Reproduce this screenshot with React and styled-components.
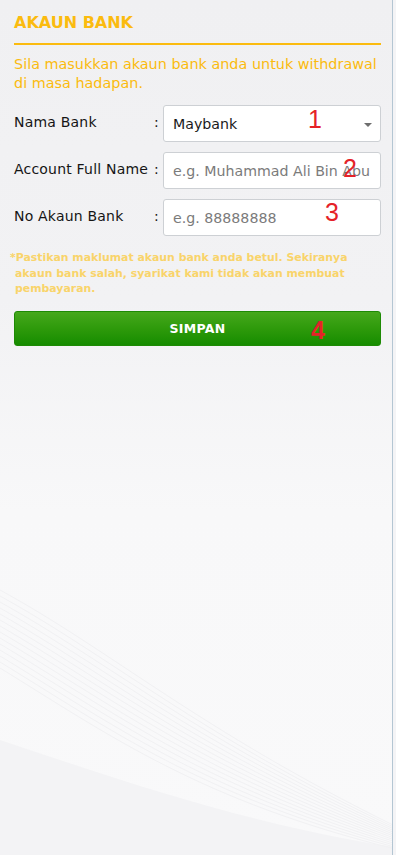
import React from 'react';
import styled, { createGlobalStyle } from 'styled-components';

const GlobalStyle = createGlobalStyle`
  html, body {
    margin: 0;
    padding: 0;
    background: #f4f4f6;
  }
  body {
    font-family: 'DejaVu Sans', 'Noto Sans', sans-serif;
  }
`;

const YELLOW = '#fbbb0f';

const Page = styled.div`
  position: relative;
  width: 393px;
  min-height: 855px;
  box-sizing: border-box;
  border-right: 1px solid #b4c6d3;
  background: linear-gradient(180deg, #f0f0f2 0%, #f2f2f4 35%, #f8f8f9 60%, #f9f9fa 100%);
  padding: 12px 11px 0 14px;
  overflow: hidden;
`;

const Backdrop = styled.svg`
  position: absolute;
  left: 0;
  bottom: 0;
  width: 393px;
  height: 300px;
  pointer-events: none;
`;

const Content = styled.div`
  position: relative;
`;

const Title = styled.h2`
  margin: 0;
  font-size: 16px;
  font-weight: bold;
  color: ${YELLOW};
  line-height: 22px;
  padding-bottom: 9px;
  border-bottom: 2px solid ${YELLOW};
`;

const Lead = styled.p`
  margin: 10px 0 0;
  font-size: 14.4px;
  line-height: 19px;
  color: ${YELLOW};
`;

const Form = styled.div`
  display: flex;
  flex-direction: column;
  gap: 10px;
  margin-top: 12px;
`;

const Row = styled.div`
  display: flex;
  align-items: center;
  height: 37px;
`;

const Label = styled.span`
  width: 140px;
  font-size: 14px;
  letter-spacing: 0.2px;
  color: #151515;
  margin-top: -4px;
  white-space: nowrap;
`;

const Colon = styled.span`
  width: 9px;
  font-size: 14px;
  color: #151515;
  margin-top: -4px;
`;

const Field = styled.div`
  position: relative;
  flex: 1;
  height: 37px;
  box-sizing: border-box;
  background: #fff;
  border: 1px solid #cdd0d4;
  border-radius: 3px;
  display: flex;
  align-items: center;
  padding: 0 9px;
  overflow: hidden;
`;

const Value = styled.span`
  font-size: 14.2px;
  color: ${p => (p.$placeholder ? '#7b7b7b' : '#1a1a1a')};
  white-space: nowrap;
`;

const Caret = styled.span`
  position: absolute;
  right: 8px;
  top: 17px;
  width: 0;
  height: 0;
  border-left: 4.5px solid transparent;
  border-right: 4.5px solid transparent;
  border-top: 4.5px solid #6e6e6e;
`;

const Mark = styled.span`
  position: absolute;
  left: ${p => p.$x}px;
  top: ${p => p.$y}px;
  font-family: 'Liberation Sans', sans-serif;
  font-size: 25px;
  line-height: 1;
  color: #e52228;
  pointer-events: none;
`;

const Note = styled.p`
  margin: 14px 0 0;
  padding-left: 1px;
  text-indent: -5px;
  font-size: 10.9px;
  line-height: 15.5px;
  font-weight: bold;
  color: #f9d46a;
`;

const SaveButton = styled.button`
  position: relative;
  display: block;
  width: 100%;
  height: 35px;
  margin-top: 14px;
  border: 1px solid #1e8a05;
  border-radius: 3px;
  background: linear-gradient(180deg, #46a81c 0%, #2e9a0b 50%, #168c00 100%);
  color: #fff;
  font-family: 'DejaVu Sans', sans-serif;
  font-size: 12.5px;
  font-weight: bold;
  letter-spacing: 0.3px;
  cursor: pointer;
`;

const fields = [
  { label: 'Nama Bank', value: 'Maybank', select: true, mark: '1', mx: 144, my: 1 },
  { label: 'Account Full Name', value: 'e.g. Muhammad Ali Bin Abu', placeholder: true, mark: '2', mx: 179, my: 3 },
  { label: 'No Akaun Bank', value: 'e.g. 88888888', placeholder: true, mark: '3', mx: 161, my: 0 },
];

// faint swoosh lines in the lower-left of the panel
const waveLines = Array.from({ length: 14 }, (_, i) => i * 6);

export default function App() {
  return (
    <>
      <GlobalStyle />
      <Page>
        <Backdrop viewBox="0 0 393 300" preserveAspectRatio="none">
          <path d="M0 185 C 120 225, 250 270, 393 292 L 393 300 L 0 300 Z" fill="#f3f3f5" />
          {waveLines.map(o => (
            <path
              key={o}
              d={`M0 ${35 + o} C 110 ${95 + o * 1.1}, 200 ${175 + o * 0.9}, 393 ${270 + o * 0.3}`}
              fill="none"
              stroke="#f1f1f3"
              strokeWidth="1"
            />
          ))}
        </Backdrop>

        <Content>
          <Title>AKAUN BANK</Title>
          <Lead>Sila masukkan akaun bank anda untuk withdrawal di masa hadapan.</Lead>

          <Form>
            {fields.map(f => (
              <Row key={f.label}>
                <Label>{f.label}</Label>
                <Colon>:</Colon>
                <Field>
                  <Value $placeholder={f.placeholder}>{f.value}</Value>
                  {f.select && <Caret />}
                  <Mark $x={f.mx} $y={f.my}>{f.mark}</Mark>
                </Field>
              </Row>
            ))}
          </Form>

          <Note>
            *Pastikan maklumat akaun bank anda betul. Sekiranya akaun bank salah, syarikat kami
            tidak akan membuat pembayaran.
          </Note>

          <SaveButton type="button">
            SIMPAN
            <Mark $x={296} $y={6}>4</Mark>
          </SaveButton>
        </Content>
      </Page>
    </>
  );
}
